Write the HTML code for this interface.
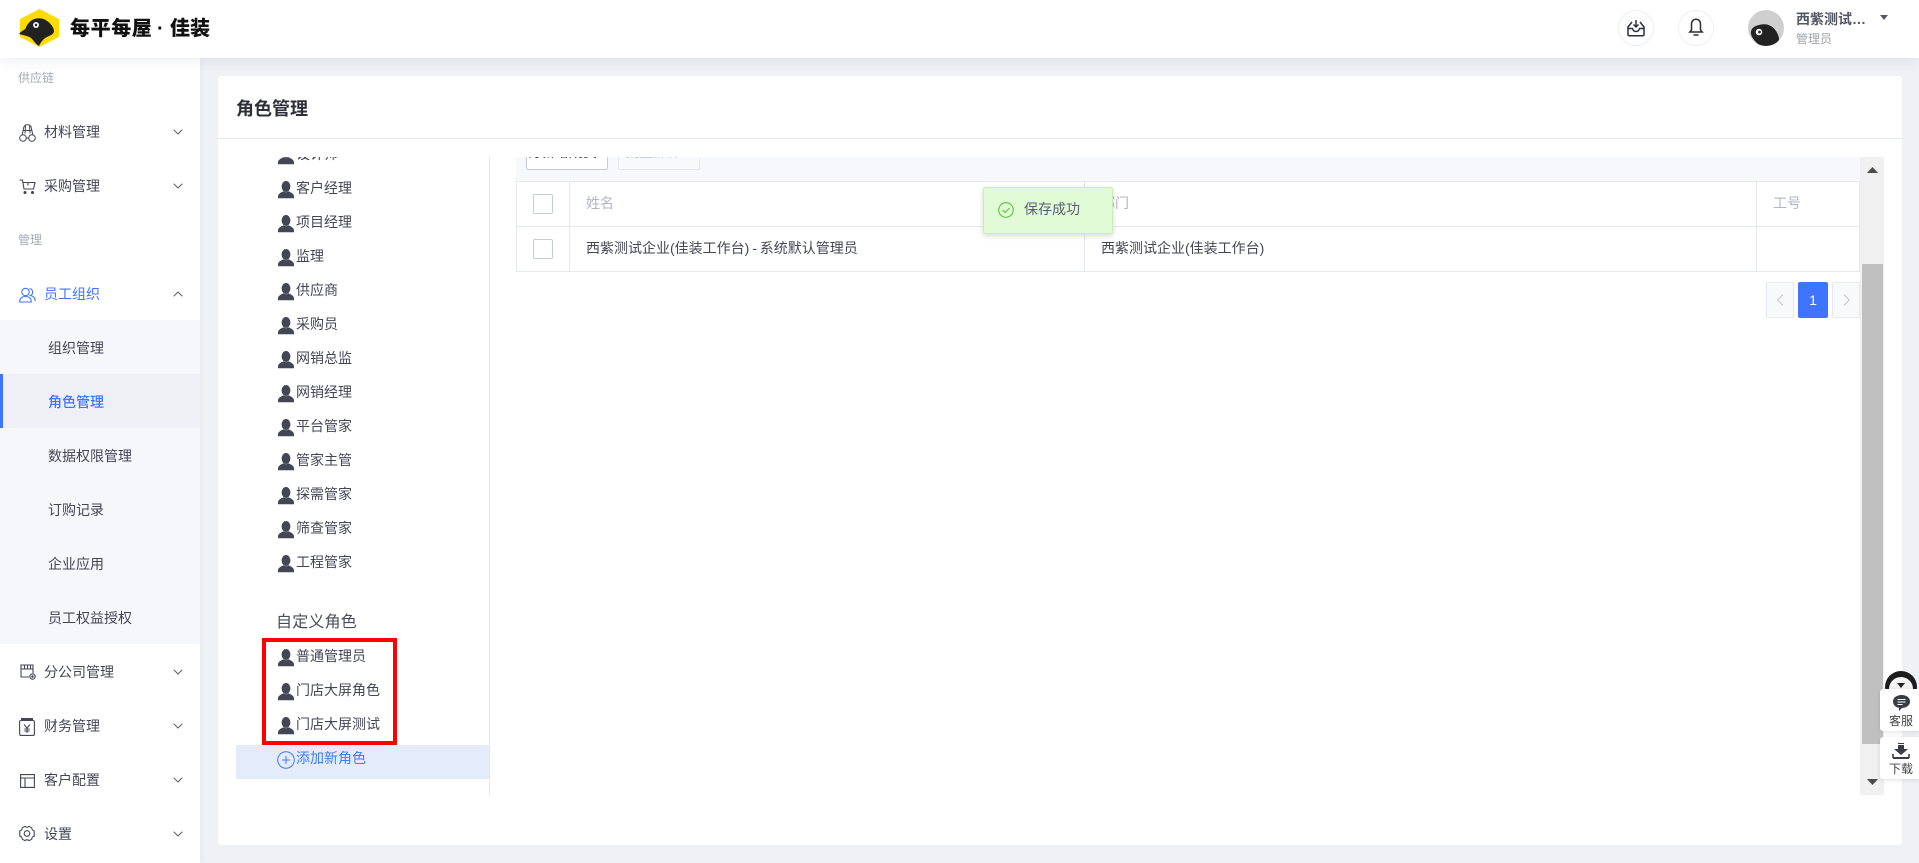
<!DOCTYPE html>
<html lang="zh-CN">
<head>
<meta charset="utf-8">
<title>角色管理</title>
<style>
*{box-sizing:border-box;margin:0;padding:0}
html,body{width:1919px;height:863px;overflow:hidden;background:#eff1f5;font-family:"Liberation Sans","Noto Sans CJK SC",sans-serif;font-size:14px;color:#444655}
.a{position:absolute;white-space:nowrap}
.header{position:absolute;left:0;top:0;width:1919px;height:58px;background:#fff;box-shadow:0 2px 14px rgba(60,70,100,.10);z-index:5}
.side{position:absolute;left:0;top:58px;width:200px;height:805px;background:#fff;box-shadow:1px 0 6px rgba(60,70,100,.05)}
.t{position:absolute;white-space:nowrap;line-height:20px;height:20px}
.lbl{font-size:12px;color:#a5a9b5;left:18px}
.mi{left:44px}
.sub{left:48px}
svg{position:absolute;display:block;overflow:visible}
.card{position:absolute;left:218px;top:76px;width:1684px;height:769px;background:#fff;border-radius:3px}
.line{position:absolute;background:#e6e8ef}
.p{position:absolute;left:278px;width:16px;height:18px}
</style>
</head>
<body>
<svg width="0" height="0" style="position:absolute">
<symbol id="person" viewBox="0 0 16 18"><ellipse cx="8" cy="5.500" rx="4.400" ry="5.500" fill="#444655"/><path d="M0 17.300v-1.800c0-2.700 2.400-3.700 5.300-5.300 1.600 1.200 3.800 1.200 5.400 0 2.900 1.600 5.300 2.600 5.300 5.300v1.800z" fill="#444655"/></symbol>
<symbol id="chev" viewBox="0 0 10 6"><path d="M.7.7 5 5 9.300.7" fill="none" stroke="#555a6a" stroke-width="1"/></symbol>
<symbol id="chevu" viewBox="0 0 10 6"><path d="M.7 5.300 5 1 9.300 5.300" fill="none" stroke="#555a6a" stroke-width="1"/></symbol>
</svg>

<div class="side">
<div class="t lbl" style="top:10px">供应链</div>
<div class="t mi" style="top:64px">材料管理</div>
<div class="t mi" style="top:118px">采购管理</div>
<div class="t lbl" style="top:172px">管理</div>
<div class="t mi" style="top:226px;color:#3f74ff">员工组织</div>
<div style="position:absolute;left:0;top:262px;width:200px;height:324px;background:#f6f7fb"></div>
<div style="position:absolute;left:0;top:316px;width:200px;height:54px;background:#eff0f5"></div>
<div style="position:absolute;left:0;top:316px;width:3px;height:54px;background:#3f74ff"></div>
<div class="t sub" style="top:280px">组织管理</div>
<div class="t sub" style="top:334px;color:#3f74ff;font-weight:500">角色管理</div>
<div class="t sub" style="top:388px">数据权限管理</div>
<div class="t sub" style="top:442px">订购记录</div>
<div class="t sub" style="top:496px">企业应用</div>
<div class="t sub" style="top:550px">员工权益授权</div>
<div class="t mi" style="top:604px">分公司管理</div>
<div class="t mi" style="top:658px">财务管理</div>
<div class="t mi" style="top:712px">客户配置</div>
<div class="t mi" style="top:766px">设置</div>
<svg style="left:173px;top:71px" width="10" height="6"><use href="#chev"/></svg>
<svg style="left:173px;top:125px" width="10" height="6"><use href="#chev"/></svg>
<svg style="left:173px;top:233px" width="10" height="6"><use href="#chevu"/></svg>
<svg style="left:173px;top:611px" width="10" height="6"><use href="#chev"/></svg>
<svg style="left:173px;top:665px" width="10" height="6"><use href="#chev"/></svg>
<svg style="left:173px;top:719px" width="10" height="6"><use href="#chev"/></svg>
<svg style="left:173px;top:773px" width="10" height="6"><use href="#chev"/></svg>
<!-- menu icons -->
<svg style="left:19px;top:66px" width="17" height="18" viewBox="0 0 17 18" fill="none" stroke="#444655" stroke-width="1"><path d="M3.200 11 4.500 4.500C5 1.500 6.500.6 8.500.6s3.500.9 4 3.900l1.300 6.500"/><path d="M6.500 1.200 6 9.500M10.500 1.200l.5 8.300M4.500 6.500h8"/><circle cx="4" cy="14" r="3.300"/><circle cx="13" cy="14" r="3.300"/><path d="M7.300 14h2.400"/></svg>
<svg style="left:19px;top:121px" width="17" height="15" viewBox="0 0 17 15" fill="none" stroke="#444655" stroke-width="1.100"><path d="M.5 1h3l1.500 9h9.500l1.500-6.500H4"/><path d="M9 3.500v3"/><circle cx="6" cy="13.500" r="1" fill="#444655"/><circle cx="13.500" cy="13.500" r="1" fill="#444655"/></svg>
<svg style="left:19px;top:229px" width="17" height="16" viewBox="0 0 17 16" fill="none" stroke="#3f74ff" stroke-width="1.100"><circle cx="6.500" cy="5" r="3.700"/><path d="M.7 15c0-3.800 2.300-5.500 5.800-5.500s5.800 1.700 5.800 5.500z"/><path d="M10.500 1.500a3.700 3.700 0 0 1 1 7c2.500.5 4.700 2 4.700 5.500"/></svg>
<svg style="left:20px;top:606px" width="16" height="16" viewBox="0 0 16 16" fill="none" stroke="#444655" stroke-width="1.100"><path d="M9 13H1V1h12v8M1 5h12M4.500 1v4M7.500 1v4M10.500 1v4"/><circle cx="12.500" cy="12.500" r="2.700"/><circle cx="12.500" cy="12.500" r=".7" fill="#444655"/></svg>
<svg style="left:19px;top:660px" width="16" height="18" viewBox="0 0 16 18" fill="none" stroke="#444655" stroke-width="1.100"><path d="M.6 3.500V16c0 .8.600 1.400 1.400 1.400h12c.8 0 1.400-.6 1.400-1.400V3.800C15.400 3 14.800 2.500 14 2.500H2C1.200 2.500.6 3 .6 3.500z"/><path d="M2 1h12" stroke-width="2"/><path d="M5 6.500l3 3.500 3-3.500M8 10v5M5.300 11h5.400M5.300 13h5.400"/></svg>
<svg style="left:20px;top:716px" width="15" height="14" viewBox="0 0 15 14" fill="none" stroke="#444655" stroke-width="1.100"><path d="M.6.6h13.800v12.800H.6zM.6 4h13.800M5 4v9.400"/></svg>
<svg style="left:19px;top:767px" width="16" height="17" viewBox="0 0 16 17" fill="none" stroke="#444655" stroke-width="1.100"><path d="M6 1.300c.6 1.200 3.400 1.200 4 0l2.800 1.500c-.3 1.300 1.100 3 2.400 3v5.400c-1.300 0-2.700 1.700-2.400 3L10 15.700c-.6-1.200-3.400-1.200-4 0l-2.800-1.500c.3-1.300-1.100-3-2.400-3V5.800c1.300 0 2.700-1.700 2.400-3z" stroke-linejoin="round"/><circle cx="8" cy="8.500" r="2.800"/></svg>
</div>

<div class="card"></div>
<div class="line" style="left:218px;top:138px;width:1684px;height:1px"></div>
<div class="t" style="left:236px;top:97px;font-size:18px;line-height:24px;height:24px;font-weight:700;color:#2e3038">角色管理</div>

<!-- Tree -->
<div class="a" style="left:218px;top:157px;width:272px;height:638px;overflow:hidden">
  <div class="t" style="left:78px;top:-13px">设计师</div>
  <svg style="left:60px;top:-10px" width="16" height="18"><use href="#person"/></svg>
</div>
<div class="line" style="left:489px;top:157px;width:1px;height:638px;background:#e3e6ef"></div>

<svg class="p" style="top:181px"><use href="#person"/></svg><div class="t" style="left:296px;top:178px">客户经理</div>
<svg class="p" style="top:215px"><use href="#person"/></svg><div class="t" style="left:296px;top:212px">项目经理</div>
<svg class="p" style="top:249px"><use href="#person"/></svg><div class="t" style="left:296px;top:246px">监理</div>
<svg class="p" style="top:283px"><use href="#person"/></svg><div class="t" style="left:296px;top:280px">供应商</div>
<svg class="p" style="top:317px"><use href="#person"/></svg><div class="t" style="left:296px;top:314px">采购员</div>
<svg class="p" style="top:351px"><use href="#person"/></svg><div class="t" style="left:296px;top:348px">网销总监</div>
<svg class="p" style="top:385px"><use href="#person"/></svg><div class="t" style="left:296px;top:382px">网销经理</div>
<svg class="p" style="top:419px"><use href="#person"/></svg><div class="t" style="left:296px;top:416px">平台管家</div>
<svg class="p" style="top:453px"><use href="#person"/></svg><div class="t" style="left:296px;top:450px">管家主管</div>
<svg class="p" style="top:487px"><use href="#person"/></svg><div class="t" style="left:296px;top:484px">探需管家</div>
<svg class="p" style="top:521px"><use href="#person"/></svg><div class="t" style="left:296px;top:518px">筛查管家</div>
<svg class="p" style="top:555px"><use href="#person"/></svg><div class="t" style="left:296px;top:552px">工程管家</div>
<div class="t" style="left:276px;top:613px;font-size:16px;letter-spacing:.2px;color:#4a4c5a">自定义角色</div>
<svg class="p" style="top:649px"><use href="#person"/></svg><div class="t" style="left:296px;top:646px">普通管理员</div>
<svg class="p" style="top:683px"><use href="#person"/></svg><div class="t" style="left:296px;top:680px">门店大屏角色</div>
<svg class="p" style="top:717px"><use href="#person"/></svg><div class="t" style="left:296px;top:714px">门店大屏测试</div>
<div class="a" style="left:262px;top:638px;width:135px;height:107px;border:4px solid #fe0000"></div>
<div class="a" style="left:236px;top:745px;width:253px;height:34px;background:#e4ecfb"></div>
<svg style="left:277px;top:751px" width="18" height="18" viewBox="0 0 18 18" fill="none" stroke="#3f7cf5" stroke-width="1"><circle cx="9" cy="9" r="8.300"/><path d="M5 9h8M9 5v8"/></svg>
<div class="t" style="left:296px;top:748px;color:#3f7cf5">添加新角色</div>

<!-- Right panel -->
<div class="a" style="left:516px;top:157px;width:1344px;height:24px;background:#f7f8fc;overflow:hidden">
  <div class="a" style="left:10px;top:-23px;width:82px;height:36px;background:#fff;border:1px solid #c6cbd7;border-radius:2px;text-align:center;line-height:34px;color:#444655;font-size:14px">待新增成员 ▾</div>
  <div class="a" style="left:102px;top:-23px;width:82px;height:36px;background:#f8f9fa;border:1px solid #e6e8ef;border-radius:2px;text-align:center;line-height:34px;color:#c4c7d0;font-size:14px">批量操作 ▾</div>
</div>
<div class="line" style="left:516px;top:181px;width:1344px;height:1px"></div>
<div class="line" style="left:516px;top:226px;width:1344px;height:1px"></div>
<div class="line" style="left:516px;top:271px;width:1344px;height:1px"></div>
<div class="line" style="left:516px;top:181px;width:1px;height:91px"></div>
<div class="line" style="left:569px;top:181px;width:1px;height:91px"></div>
<div class="line" style="left:1084px;top:181px;width:1px;height:91px"></div>
<div class="line" style="left:1756px;top:181px;width:1px;height:91px"></div>
<div class="line" style="left:1859px;top:181px;width:1px;height:91px"></div>
<div class="a" style="left:533px;top:194px;width:20px;height:20px;border:1px solid #c5ccd6;border-radius:2px;background:#fff"></div>
<div class="a" style="left:533px;top:239px;width:20px;height:20px;border:1px solid #c5ccd6;border-radius:2px;background:#fff"></div>
<div class="t" style="left:586px;top:193px;color:#b0b6c4">姓名</div>
<div class="t" style="left:1101px;top:193px;color:#b0b6c4">部门</div>
<div class="t" style="left:1773px;top:193px;color:#b0b6c4">工号</div>
<div class="t" style="left:586px;top:238px;word-spacing:-1px">西紫测试企业(佳装工作台) - 系统默认管理员</div>
<div class="t" style="left:1101px;top:238px">西紫测试企业(佳装工作台)</div>

<!-- pagination -->
<div class="a" style="left:1766px;top:282px;width:28px;height:36px;background:#f8f9fa;border:1px solid #e6e8ef;border-radius:2px"></div>
<svg style="left:1777px;top:294px" width="7" height="12" viewBox="0 0 7 12"><path d="M6 .7.8 6 6 11.300" fill="none" stroke="#c5cad8" stroke-width="1.200"/></svg>
<div class="a" style="left:1798px;top:282px;width:30px;height:36px;background:#3f74ff;border-radius:2px;color:#fff;text-align:center;line-height:36px;font-size:14px">1</div>
<div class="a" style="left:1832px;top:282px;width:28px;height:36px;background:#f8f9fa;border:1px solid #e6e8ef;border-radius:2px"></div>
<svg style="left:1843px;top:294px" width="7" height="12" viewBox="0 0 7 12"><path d="M1 .7 6.200 6 1 11.300" fill="none" stroke="#c5cad8" stroke-width="1.200"/></svg>

<!-- scrollbar -->
<div class="a" style="left:1860px;top:157px;width:24px;height:638px;background:#f0f0f0"></div>
<div class="a" style="left:1862px;top:264px;width:21px;height:480px;background:#c0c0c0"></div>
<svg style="left:1867px;top:167px" width="11" height="6"><path d="M5.500 0 11 6H0z" fill="#4a4a4a"/></svg>
<svg style="left:1867px;top:779px" width="11" height="6"><path d="M0 0h11L5.500 6z" fill="#4a4a4a"/></svg>

<!-- toast -->
<div class="a" style="left:983px;top:187px;width:130px;height:47px;background:#e1fbd6;border:1px solid #c8eeb5;border-radius:2px;box-shadow:0 2px 6px rgba(0,0,0,.15)"></div>
<svg style="left:998px;top:202px" width="16" height="16" viewBox="0 0 16 16" fill="none" stroke="#5cc13d" stroke-width="1.100"><circle cx="8" cy="8" r="7.300"/><path d="M4.500 8l2.500 2.500 4.500-4.500"/></svg>
<div class="t" style="left:1024px;top:199px;color:#5a6070">保存成功</div>

<!-- floats -->
<div class="a" style="left:1885px;top:671px;width:32px;height:32px;border-radius:50%;background:#1c1c1c"></div>
<div class="a" style="left:1889px;top:677px;width:24px;height:24px;border-radius:50%;background:#f4f4f4"></div>
<svg style="left:1897px;top:683px" width="8" height="5"><path d="M0 0h8L4 5z" fill="#222"/></svg>
<div class="a" style="left:1880px;top:689px;width:39px;height:42px;background:#fff;border-radius:3px 0 0 3px;box-shadow:0 1px 4px rgba(0,0,0,.12)"></div>
<svg style="left:1893px;top:695px" width="17" height="16" viewBox="0 0 17 16"><path d="M8.500 0C13 0 17 2.500 17 6.500S13 13 9 13l-3 3v-3.200C2.500 12.300 0 10 0 6.500 0 2.500 4 0 8.500 0z" fill="#3a3c46"/><path d="M4.500 4.500h8M4.500 7h8M4.500 9.500h5" stroke="#fff" stroke-width="1.100"/></svg>
<div class="t" style="left:1889px;top:711px;font-size:12px;color:#444">客服</div>
<div class="a" style="left:1880px;top:737px;width:39px;height:42px;background:#fff;border-radius:3px 0 0 3px;box-shadow:0 1px 4px rgba(0,0,0,.12)"></div>
<svg style="left:1892px;top:743px" width="18" height="16" viewBox="0 0 18 16"><path d="M6 0h6v1H6zM6 2h6v4h4l-7 6-7-6h4z" fill="#3a3c46"/><path d="M1 15h16" stroke="#3a3c46" stroke-width="2"/><path d="M1 11v4M17 11v4" stroke="#3a3c46" stroke-width="1.600"/></svg>
<div class="t" style="left:1889px;top:759px;font-size:12px;color:#444">下载</div>

<!-- header -->
<div class="header">
  <svg style="left:19px;top:8px" width="41" height="40" viewBox="0 0 41 40"><path d="M20.500 1 39 10.500c.8.400 1 1 1 2v15c0 1-.2 1.600-1 2L20.500 39 2 29.500c-.8-.4-1-1-1-2v-15c0-1 .2-1.600 1-2z" fill="#ffdc00"/><path d="M0 26c2-3 5-3.500 6.500-5.500C8 16 12 11.500 17 10.500c5-1 9 .5 12.500 3.500 3.500 3 5.500 6.500 5.500 9 0 3-3.500 4.500-7 6-3.500 1.500-6 5-8 9-3-1.500-5-5-7.500-7.500C10 28 5 27.500 0 26z" fill="#222"/><circle cx="17" cy="17" r="3" fill="#eee"/><circle cx="17" cy="17" r="1.200" fill="#222"/></svg>
  <div class="t" style="left:70px;top:16px;font-size:20px;line-height:26px;height:26px;font-weight:900;color:#111;letter-spacing:.6px">每平每屋</div>
  <div class="t" style="left:157px;top:16px;font-size:20px;line-height:26px;height:26px;font-weight:900;color:#111">·</div>
  <div class="t" style="left:170px;top:16px;font-size:20px;line-height:26px;height:26px;font-weight:900;color:#111">佳装</div>

  <div class="a" style="left:1618px;top:10px;width:36px;height:36px;border:1px solid #eceef4;border-radius:50%"></div>
  <svg style="left:1627px;top:19px" width="18" height="18" viewBox="0 0 18 18" fill="none" stroke="#2d2f3a" stroke-width="1.500"><path d="M5 3 1 8v7.500c0 .8.600 1.300 1.300 1.300h13.400c.7 0 1.300-.5 1.300-1.300V8l-4-5"/><path d="M1 9.500h4.500c.5 2 1.700 3 3.500 3s3-1 3.500-3H17"/><path d="M9 1v7M6.500 5.500 9 8l2.500-2.500"/></svg>
  <div class="a" style="left:1678px;top:10px;width:36px;height:36px;border:1px solid #eceef4;border-radius:50%"></div>
  <svg style="left:1689px;top:18px" width="14" height="18" viewBox="0 0 14 18" fill="none" stroke="#2d2f3a" stroke-width="1.500"><path d="M7 1.200c-2.500 0-4.500 2-4.500 4.800v6L.8 14h12.400l-1.700-2V6c0-2.800-2-4.800-4.500-4.800z"/><path d="M4.500 17h5"/></svg>
  <div class="a" style="left:1748px;top:10px;width:36px;height:36px;border-radius:50%;background:#cfcfcf;overflow:hidden">
    <svg style="left:0;top:0" width="36" height="36" viewBox="0 0 36 36"><path d="M3 24c-1-5 3-8 8-9 7-2 13 0 17 6 2 3 3 6 3 9l-5 6H12C9 33 4 29 3 24z" fill="#222"/><circle cx="11" cy="22" r="3.300" fill="#eee"/><circle cx="11.500" cy="22" r="1.300" fill="#222"/></svg>
  </div>
  <div class="t" style="left:1796px;top:9px;font-weight:700;color:#555862">西紫测试…</div>
  <div class="t" style="left:1796px;top:29px;font-size:12px;color:#a0a3ad">管理员</div>
  <svg style="left:1880px;top:15px" width="8" height="5"><path d="M0 0h8L4 5z" fill="#555862"/></svg>
</div>
</body>
</html>
